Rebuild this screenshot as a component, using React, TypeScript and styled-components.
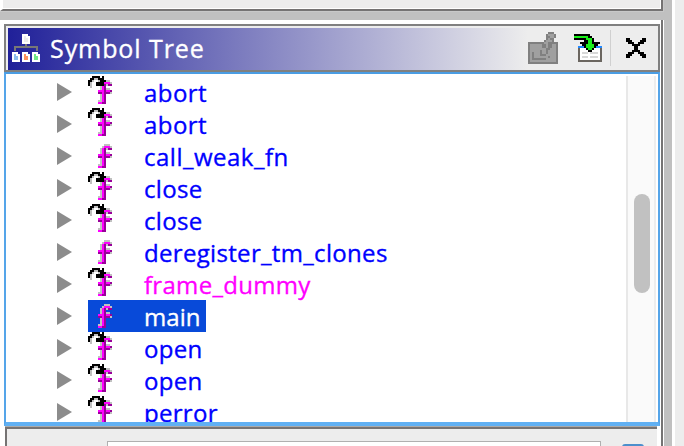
import React from 'react';
import styled, { createGlobalStyle } from 'styled-components';

const Global = createGlobalStyle`
  * { box-sizing: border-box; }
  html, body { margin: 0; background: #ededed; overflow: hidden; }
`;

const Window = styled.div`
  width: 684px;
  height: 446px;
  display: flex;
  overflow: hidden;
  background: #fff;
  font-family: 'Open Sans', 'Noto Sans', sans-serif;
`;
const LeftColumn = styled.div`
  width: 664px;
  display: flex;
  flex-direction: column;
`;
const UpperPanel = styled.div`
  height: 12px;
  flex: none;
  background: #c8c8c8;
  padding-right: 1px;
`;
const UpperBody = styled.div`
  height: 11px;
  background: #ededed;
  border-left: 3px solid #fff;
  border-right: 2px solid #757373;
  border-bottom: 2px solid #757373;
  box-shadow: inset -1px -1px #fff;
`;
const HorizontalSplit = styled.div`
  height: 8px;
  background: #c0c0c0;
  flex: none;
`;
const LowerPanel = styled.div`
  height: 426px;
  width: 663px;
  border-right: 2px solid #757373;
  padding: 4px 1px 0 4px;
  flex: none;
`;
const Panel = styled.div`
  height: 402px;
  display: flex;
  flex-direction: column;
`;
const TitleBar = styled.div`
  height: 48px;
  padding: 2px 0 0 2px;
  border: 2px solid #808080;
  background: #ededed;
  flex: none;
`;
const TitleFill = styled.div`
  height: 42px;
  padding-bottom: 2px;
  display: flex;
  align-items: center;
  background: linear-gradient(90deg, #202099 0, #ededed 520px);
`;
const Title = styled.h1`
  margin: 0 auto 0 10px;
  font-size: 25px;
  line-height: 40px;
  font-weight: 400;
  color: #fff;
  letter-spacing: 0.92px;
  -webkit-text-stroke: 0.35px #fff;
`;
const IconButton = styled.button<{ $w: number; $inset: number }>`
  width: ${(p) => p.$w}px;
  height: 36px;
  padding: 0 0 0 ${(p) => p.$inset}px;
  border: 0;
  background: none;
  display: flex;
  align-items: center;
  flex: none;
`;
const Divider = styled.span`
  width: 1px;
  height: 36px;
  background: #d0d0d0;
`;
const TreeFrame = styled.div`
  height: 354px;
  border: 2px solid #55a5e9;
  border-bottom: 4px solid #60b0f3;
  border-top-color: #4a9de3;
  background: #fff;
  display: flex;
`;
const Tree = styled.ul`
  flex: 1;
  margin: 0;
  padding: 2px 0 0;
  list-style: none;
  overflow: hidden;
`;
const Row = styled.li`
  height: 32px;
  display: flex;
  align-items: center;
  padding-left: 51px;
`;
const Arrow = styled.span`
  width: 0;
  height: 0;
  border: 9px solid transparent;
  border-left: 15px solid #8c8c8c;
  border-right: 0;
  margin-right: 16px;
`;
const Node = styled.span<{ $selected?: boolean; $color: string }>`
  height: 32px;
  display: flex;
  align-items: center;
  padding-right: 5px;
  background: ${(p) => (p.$selected ? '#084ad9' : 'transparent')};
  color: ${(p) => p.$color};
`;
const Label = styled.span<{ $spacing: number }>`
  margin-left: 24px;
  padding-top: 2px;
  font-size: 24px;
  line-height: 30px;
  letter-spacing: ${(p) => p.$spacing}px;
  -webkit-text-stroke: 0.35px currentColor;
  white-space: nowrap;
`;
const ScrollTrack = styled.div`
  width: 30px;
  margin: 2px 2px 0 0;
  padding: 118px 0 0 6px;
  border-left: 2px solid #e8e8e8;
  border-right: 2px solid #ededed;
  background: #fafafa;
`;
const ScrollThumb = styled.div`
  width: 16px;
  height: 99px;
  border-radius: 8px;
  background: #c1c1c1;
`;
const FilterPanel = styled.div`
  width: 652px;
  height: 19px;
  margin: 1px 0 0 1px;
  border-top: 2px solid #757373;
  border-left: 2px solid #757373;
  background: #ededed;
  box-shadow: 0 -1px #aaa;
  padding: 12px 0 0 100px;
  display: flex;
  gap: 21px;
`;
const FilterInput = styled.div`
  width: 494px;
  height: 10px;
  border: 1px solid #b0b0b0;
  background: #fff;
`;
const FilterButton = styled.div`
  width: 22px;
  height: 8px;
  margin-top: 3px;
  border-radius: 3px 3px 0 0;
  background: #4c8fcc;
`;
const RightEdge = styled.div`
  width: 20px;
  background: #ededed;
  border-left: 8px solid #c0c0c0;
  box-shadow: inset 3px 0 #fff;
`;

const palette: Record<string, string> = {
  m: '#ff00ff', d: '#990099', g: '#c0c0c0', k: '#000000', w: '#ffffff',
  s: '#a0a0a0', t: '#808080', b: '#2288ff', e: '#1bf01b', n: '#6b6660', l: '#d8d8d8',
};

function Pixels({ rows, size = 2 }: { rows: string[]; size?: number }) {
  const width = Math.max(...rows.map((r) => r.length));
  return (
    <svg width={width * size} height={rows.length * size} viewBox={`0 0 ${width} ${rows.length}`} shapeRendering="crispEdges">
      {rows.flatMap((row, y) =>
        [...row].map((c, x) => palette[c] && <rect key={`${x}-${y}`} x={x} y={y} width="1" height="1" fill={palette[c]} />),
      )}
    </svg>
  );
}

const plain = [
  '................',
  '................',
  '........ggg.....',
  '.......gmmmg....',
  '......gmdgdd....',
  '......gmd.......',
  '......gmdgg.....',
  '.....mmmdmmd....',
  '.....ddmdddg....',
  '......gmd.......',
  '......gmd.......',
  '......gmd.......',
  '.....ggmd.......',
  '.....mmdd.......',
  '................',
  '................',
];
const thunk = [
  '..kkkk.k........',
  '.kkggkkk........',
  'kkg..gkkkgg.....',
  'kg..kkkkmmmg....',
  'kg..kkkkdgdd....',
  '.g....gmd.......',
  '......gmdgg.....',
  '.....mmmdmmd....',
  '.....ddmdddg....',
  '......gmd.......',
  '......gmd.......',
  '......gmd.......',
  '.....ggmd.......',
  '.....mmdd.......',
  '................',
  '................',
];
const editArt = [
  '..........ttt..',
  '.........tssst.',
  '.........ttsst.',
  '.........tstt..',
  '........tssst..',
  'ttttttttssttttt',
  'tssssssttsttsst',
  'tssssssttsttsst',
  'tssssssssttssst',
  'tssssstsstsssst',
  'tstssstsstsssst',
  'tstssstttssssst',
  'tstssssssstssst',
  'tstttttttssssst',
  'tssssssssssssst',
  'ttttttttttttttt',
];
const navigateArt = [
  'kkkkkkkk......',
  'eeeeeeekk.....',
  'kkkkkkeeek....',
  '.....kkeek....',
  '...kkkkeekkkk.',
  '....kkeeeekk..',
  '..bbbkeeeekbbb',
  '..nwwwkeekwwwn',
  '..nwwwwkkwwwwn',
  '..nwlllwllllwn',
  '..nwwwwwwwwwwn',
  '..nwlllwllllwn',
  '..nwwwwwwwwwwn',
  '..nnnnnnnnnnnn',
];
const closeArt = [
  'kk......kk',
  'kkk....kkk',
  '.kkk..kkk.',
  '...kkkk...',
  '....kk....',
  '....kk....',
  '...kkkk...',
  '.kkk..kkk.',
  'kkk....kkk',
  'kk......kk',
];

function TreeLogo() {
  const page = (x: number, y: number, fill: string) => (
    <g>
      <path d={`M${x} ${y}h6v2h2v8h-8z`} fill="#fff" />
      <path d={`M${x + 2} ${y + 2}h2v2h2v4h-4z`} fill={fill} />
    </g>
  );
  return (
    <svg width="32" height="32" viewBox="0 0 32 32" shapeRendering="crispEdges">
      {page(14, 2, '#ededed')}
      <path d="M18 12v3M7 19v-4h22v4" fill="none" stroke="#777" strokeWidth="2" />
      {page(4, 20, '#8ec0ee')}
      {page(14, 20, '#ff935e')}
      {page(24, 20, '#72e886')}
    </svg>
  );
}

type Item = { name: string; thunk: boolean; color?: string; selected?: boolean; spacing?: number };
const items: Item[] = [
  { name: 'abort', thunk: true, spacing: 0.45 },
  { name: 'abort', thunk: true, spacing: 0.45 },
  { name: 'call_weak_fn', thunk: false, spacing: 0.5 },
  { name: 'close', thunk: true },
  { name: 'close', thunk: true },
  { name: 'deregister_tm_clones', thunk: false, spacing: 0.32 },
  { name: 'frame_dummy', thunk: true, color: '#ff00ff' },
  { name: 'main', thunk: false, color: '#fff', selected: true, spacing: 0.05 },
  { name: 'open', thunk: true },
  { name: 'open', thunk: true },
  { name: 'perror', thunk: true },
];

export default function App() {
  return (
    <Window>
      <Global />
      <LeftColumn>
        <UpperPanel>
          <UpperBody />
        </UpperPanel>
        <HorizontalSplit />
        <LowerPanel>
          <Panel>
            <TitleBar>
              <TitleFill>
                <TreeLogo />
                <Title>Symbol Tree</Title>
                <IconButton $w={42} $inset={6}><Pixels rows={editArt} /></IconButton>
                <IconButton $w={46} $inset={10}><Pixels rows={navigateArt} /></IconButton>
                <Divider />
                <IconButton $w={47} $inset={15}><Pixels rows={closeArt} /></IconButton>
              </TitleFill>
            </TitleBar>
            <TreeFrame>
              <Tree>
                {items.map((item, i) => (
                  <Row key={i}>
                    <Arrow />
                    <Node $selected={item.selected} $color={item.color ?? '#0000ff'}>
                      <Pixels rows={item.thunk ? thunk : plain} />
                      <Label $spacing={item.spacing ?? 0.3}>{item.name}</Label>
                    </Node>
                  </Row>
                ))}
              </Tree>
              <ScrollTrack>
                <ScrollThumb />
              </ScrollTrack>
            </TreeFrame>
          </Panel>
          <FilterPanel>
            <FilterInput />
            <FilterButton />
          </FilterPanel>
        </LowerPanel>
      </LeftColumn>
      <RightEdge />
    </Window>
  );
}
